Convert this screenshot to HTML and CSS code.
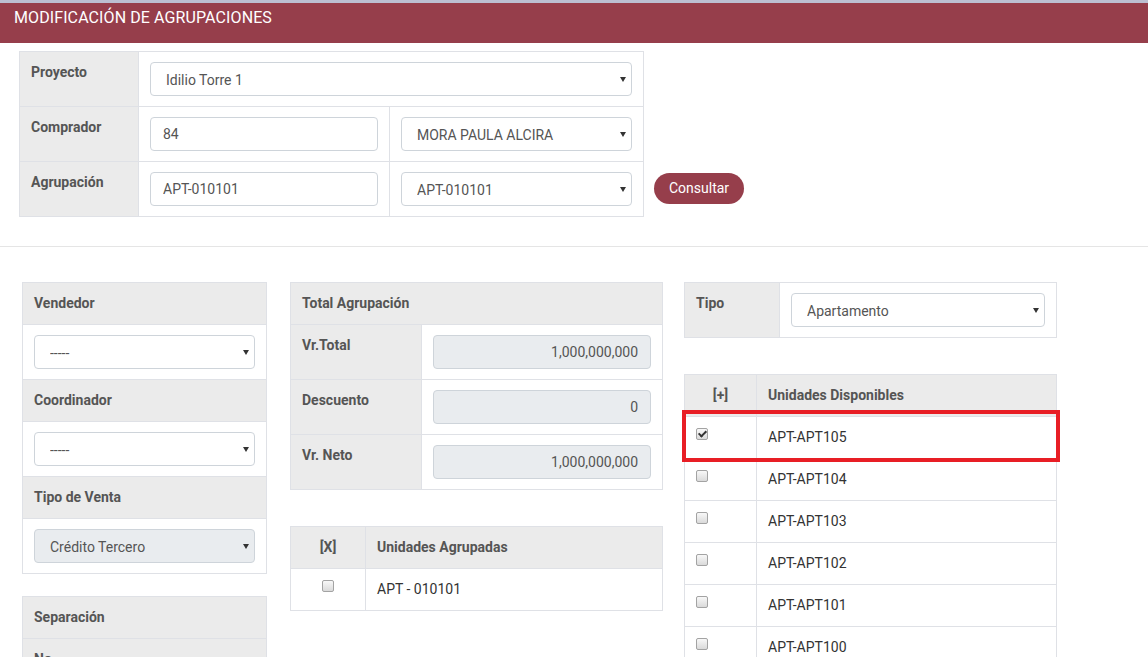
FILE: index.html
```html
<!DOCTYPE html>
<html lang="es">
<head>
<meta charset="utf-8">
<title>Modificación de Agrupaciones</title>
<link rel="stylesheet" href="styles.css">
</head>
<body>
<header class="page-title">MODIFICACIÓN DE AGRUPACIONES</header>

<section class="query">
  <table class="grid query-table">
    <colgroup><col class="w119"><col class="w251"><col class="w254"></colgroup>
    <tr>
      <th>Proyecto</th>
      <td colspan="2"><span class="sel"><select class="ctl"><option>Idilio Torre 1</option></select></span></td>
    </tr>
    <tr>
      <th>Comprador</th>
      <td><input class="ctl" type="text" value="84"></td>
      <td><span class="sel"><select class="ctl"><option>MORA PAULA ALCIRA</option></select></span></td>
    </tr>
    <tr>
      <th>Agrupación</th>
      <td><input class="ctl" type="text" value="APT-010101"></td>
      <td><span class="sel"><select class="ctl"><option>APT-010101</option></select></span></td>
    </tr>
  </table>
  <button class="btn" type="button">Consultar</button>
</section>

<hr class="sep">

<section class="panels">
  <div class="col col-left">
    <table class="grid full">
      <tr><th class="head">Vendedor</th></tr>
      <tr><td><span class="sel"><select class="ctl"><option>-----</option></select></span></td></tr>
      <tr><th class="head">Coordinador</th></tr>
      <tr><td><span class="sel"><select class="ctl"><option>-----</option></select></span></td></tr>
      <tr><th class="head">Tipo de Venta</th></tr>
      <tr><td><span class="sel"><select class="ctl" disabled><option>Crédito Tercero</option></select></span></td></tr>
    </table>
    <table class="grid full stack">
      <tr><th class="head">Separación</th></tr>
      <tr><th>No.</th></tr>
      <tr><td><input class="ctl" type="text" value=""></td></tr>
    </table>
  </div>

  <div class="col col-mid">
    <table class="grid full">
      <colgroup><col class="w131"><col></colgroup>
      <tr><th class="head" colspan="2">Total Agrupación</th></tr>
      <tr><th>Vr.Total</th><td><input class="ctl num" type="text" value="1,000,000,000" readonly></td></tr>
      <tr><th>Descuento</th><td><input class="ctl num" type="text" value="0" readonly></td></tr>
      <tr><th>Vr. Neto</th><td><input class="ctl num" type="text" value="1,000,000,000" readonly></td></tr>
    </table>
    <table class="grid full stack2 list">
      <colgroup><col class="w75"><col></colgroup>
      <tr><th class="head center">[X]</th><th class="head">Unidades Agrupadas</th></tr>
      <tr><td><input class="chk mid" type="checkbox"></td><td>APT - 010101</td></tr>
    </table>
  </div>

  <div class="col col-right">
    <table class="grid full">
      <colgroup><col class="w95"><col></colgroup>
      <tr><th>Tipo</th><td><span class="sel"><select class="ctl"><option>Apartamento</option></select></span></td></tr>
    </table>
    <table class="grid full stack2 list">
      <colgroup><col class="w72"><col></colgroup>
      <tr><th class="head center">[+]</th><th class="head">Unidades Disponibles</th></tr>
      <tr><td><input class="chk" type="checkbox" checked></td><td>APT-APT105</td></tr>
      <tr><td><input class="chk" type="checkbox"></td><td>APT-APT104</td></tr>
      <tr><td><input class="chk" type="checkbox"></td><td>APT-APT103</td></tr>
      <tr><td><input class="chk" type="checkbox"></td><td>APT-APT102</td></tr>
      <tr><td><input class="chk" type="checkbox"></td><td>APT-APT101</td></tr>
      <tr><td><input class="chk" type="checkbox"></td><td>APT-APT100</td></tr>
    </table>
    <div class="highlight"></div>
  </div>
</section>
</body>
</html>
```

FILE: styles.css
```css
* { box-sizing: border-box; }

body {
  margin: 0;
  font-family: Roboto, "Liberation Sans", Arial, sans-serif;
  font-size: 14px;
  line-height: 20px;
  color: #333;
  background: #fff;
}

.page-title {
  border-top: 3px solid #bcbfd1;
  background: #963e4b;
  color: #fff;
  font-size: 16px;
  letter-spacing: 0.1px;
  line-height: 20px;
  padding: 5px 14px 15px;
}

.query {
  display: flex;
  align-items: flex-end;
  gap: 10px;
  padding: 8px 0 0 19px;
}

.grid {
  border-collapse: collapse;
  table-layout: fixed;
}

.grid th,
.grid td {
  border: 1px solid #dfe1e6;
  padding: 10px 11px;
  text-align: left;
  vertical-align: top;
}

.grid th {
  background: #ebebeb;
  color: #555;
  font-weight: bold;
}

.grid .head {
  line-height: 21px;
}

.grid .center { text-align: center; }

.list td {
  line-height: 21px;
  color: #333;
}

.query-table { width: 624px; }
.w119 { width: 119px; }
.w251 { width: 251px; }
.w254 { width: 254px; }
.w131 { width: 131px; }
.w75 { width: 75px; }
.w95 { width: 95px; }
.w72 { width: 72px; }

.full { width: 100%; }

.ctl {
  display: block;
  width: 100%;
  height: 34px;
  margin: 0;
  padding: 6px 12px;
  border: 1px solid #ced4da;
  border-radius: 4px;
  font-family: inherit;
  font-size: 14px;
  line-height: 20px;
  color: #555;
  background: #fff;
}

select.ctl {
  -webkit-appearance: none;
  appearance: none;
  padding: 7px 24px 5px 15px;
}

.ctl[readonly],
.ctl:disabled {
  background: #e9ecef;
  color: #555;
  opacity: 1;
}

.num { text-align: right; }

.sel {
  position: relative;
  display: block;
}

.sel::after {
  content: "";
  position: absolute;
  right: 6px;
  top: 50%;
  margin-top: -2px;
  border-left: 3px solid transparent;
  border-right: 3px solid transparent;
  border-top: 5px solid #333;
  pointer-events: none;
}

.btn {
  margin-bottom: 13px;
  height: 31px;
  padding: 5px 15px;
  border: 0;
  border-radius: 16px;
  background: #963e4b;
  color: #fff;
  font-family: inherit;
  font-size: 14px;
  line-height: 21px;
}

.sep {
  margin: 29px 0 35px;
  height: 0;
  border: 0;
  border-top: 1px solid #e5e5e5;
}

.panels {
  display: flex;
  align-items: flex-start;
  padding-left: 22px;
}

.col-left { width: 245px; margin-right: 23px; }
.col-mid { width: 373px; margin-right: 21px; }
.col-right { width: 373px; position: relative; }

.stack { margin-top: 22px; }
.stack2 { margin-top: 36px; }

.chk {
  -webkit-appearance: none;
  appearance: none;
  position: relative;
  display: block;
  width: 12px;
  height: 12px;
  margin: 1px 0 0;
  border: 1px solid #a3a3a3;
  border-radius: 2px;
  background: linear-gradient(#f8f8f8, #dadada);
}

.chk.mid { margin: 1px auto 0; }

.chk:checked::after {
  content: "";
  position: absolute;
  left: 3px;
  top: 0;
  width: 3px;
  height: 6px;
  border: solid #333;
  border-width: 0 2px 2px 0;
  transform: rotate(45deg);
}

.highlight {
  position: absolute;
  left: -2px;
  top: 128px;
  width: 378px;
  height: 52px;
  border: 4px solid #e81e25;
  pointer-events: none;
}
```
